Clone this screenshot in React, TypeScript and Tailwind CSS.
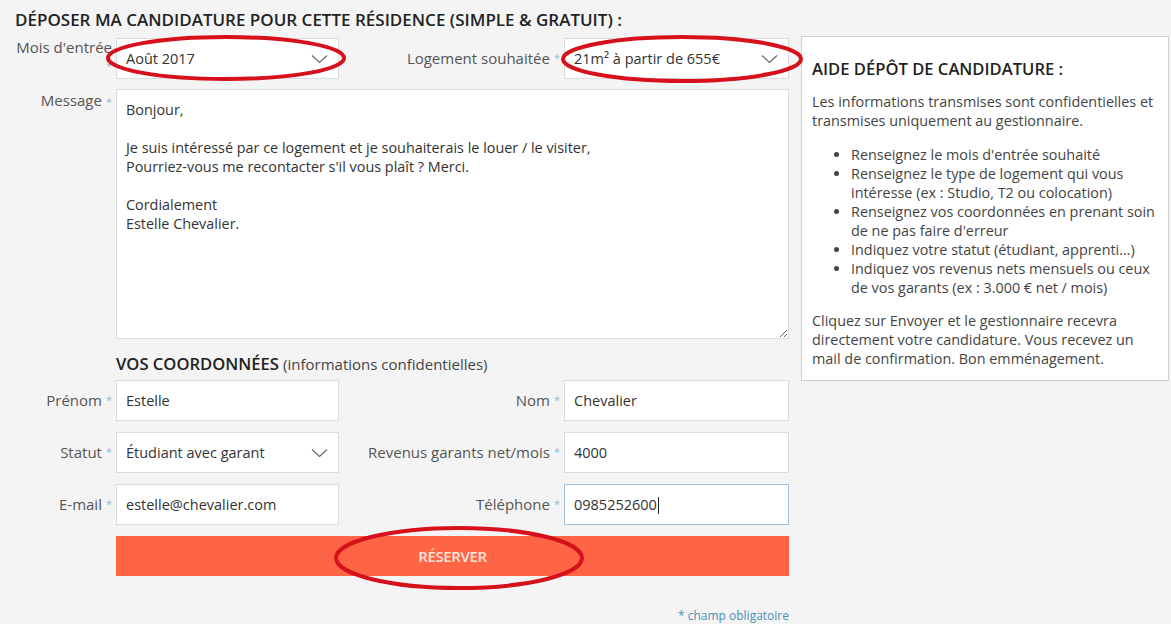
import React from 'react';

const Star = () => <span className="text-[#8dbdd8] text-[11px] ml-[4px]">*</span>;

function Chevron() {
    return (
        <svg width="17" height="10" viewBox="0 0 17 10" className="shrink-0">
            <path d="M1 1.5 L8.5 8.5 L16 1.5" fill="none" stroke="#666" strokeWidth="1.2" />
        </svg>
    );
}

function Field({ value, select, focus }: { value: string; select?: boolean; focus?: boolean }) {
    return (
        <div
            className={`flex items-center h-full bg-white border pl-[9px] pr-[10px] text-[14.5px] text-[#333] ${
                focus ? 'border-[#9fbfdc]' : 'border-[#dcdcdc]'
            }`}
        >
            <span className="flex-1 whitespace-nowrap">
                {value}
                {focus && <span className="inline-block w-px h-[17px] bg-[#222] align-middle ml-px" />}
            </span>
            {select && <Chevron />}
        </div>
    );
}

function Label({ children, className = '' }: { children: React.ReactNode; className?: string }) {
    return (
        <div className={`flex items-center justify-end pr-[4px] text-[15px] text-[#555] whitespace-nowrap ${className}`}>
            {children}
        </div>
    );
}

const message = `Bonjour,

Je suis intéressé par ce logement et je souhaiterais le louer / le visiter,
Pourriez-vous me recontacter s'il vous plaît ? Merci.

Cordialement
Estelle Chevalier.`;

export default function App() {
    return (
        <div className="relative w-[1171px] h-[624px] overflow-hidden bg-[#f4f4f4] font-['Open_Sans',sans-serif]">
            <h1 className="pl-[15px] pt-[10px] text-[17px] leading-5 font-semibold text-[#222] whitespace-nowrap">
                DÉPOSER MA CANDIDATURE POUR CETTE RÉSIDENCE (SIMPLE &amp; GRATUIT) :
            </h1>

            <div className="flex mt-[6px]">
                {/* form */}
                <div className="w-[789px] pt-[2px] flex flex-col">
                    <div className="flex h-[41px]">
                        <div className="w-[116px] pr-[4px] text-right text-[15px] text-[#555] leading-[20px] whitespace-nowrap">
                            <div className="-mt-[1px]">Mois d'entrée</div>
                            <div className="leading-[10px] mt-[2px]"><Star /></div>
                        </div>
                        <div className="w-[223px]"><Field value="Août 2017" select /></div>
                        <Label className="w-[225px]">Logement souhaitée<Star /></Label>
                        <div className="w-[225px]"><Field value="21m² à partir de 655€" select /></div>
                    </div>

                    <div className="flex mt-[10px]">
                        <div className="w-[116px] pr-[4px] text-right text-[15px] text-[#555] whitespace-nowrap">
                            Message<Star />
                        </div>
                        <textarea
                            readOnly
                            value={message}
                            className="w-[673px] h-[250px] bg-white border border-[#dcdcdc] pl-[9px] pt-[10px] text-[14.4px] leading-[19px] text-[#333] font-['Open_Sans',sans-serif] outline-none"
                        />
                    </div>

                    <div className="ml-[116px] mt-[15px] text-[#222] whitespace-nowrap leading-5">
                        <span className="text-[16.6px] font-semibold">VOS COORDONNÉES</span>{' '}
                        <span className="text-[15px] text-[#444]">(informations confidentielles)</span>
                    </div>

                    <div className="flex flex-col gap-[11px] mt-[6px]">
                        <div className="flex h-[41px]">
                            <Label className="w-[116px]">Prénom<Star /></Label>
                            <div className="w-[223px]"><Field value="Estelle" /></div>
                            <Label className="w-[225px]">Nom<Star /></Label>
                            <div className="w-[225px]"><Field value="Chevalier" /></div>
                        </div>
                        <div className="flex h-[41px]">
                            <Label className="w-[116px]">Statut<Star /></Label>
                            <div className="w-[223px]"><Field value="Étudiant avec garant" select /></div>
                            <Label className="w-[225px]">Revenus garants net/mois<Star /></Label>
                            <div className="w-[225px]"><Field value="4000" /></div>
                        </div>
                        <div className="flex h-[41px]">
                            <Label className="w-[116px]">E-mail<Star /></Label>
                            <div className="w-[223px]"><Field value="estelle@chevalier.com" /></div>
                            <Label className="w-[225px]">Téléphone<Star /></Label>
                            <div className="w-[225px]"><Field value="0985252600" focus /></div>
                        </div>
                        <div className="flex">
                            <div className="w-[116px]" />
                            <button className="w-[673px] h-[40px] bg-[#ff6545] text-[#fbe3dc] text-[15px] font-semibold tracking-tight">
                                RÉSERVER
                            </button>
                        </div>
                    </div>

                    <div className="mt-[31px] text-right text-[12px] text-[#4a8fb5]">* champ obligatoire</div>
                </div>

                {/* help panel */}
                <aside className="ml-[12px] w-[368px] self-start bg-white border border-[#cfcfcf] pl-[10px] pr-[6px] pt-[22px] pb-[12px] text-[14.4px] leading-[19px] text-[#444] whitespace-nowrap">
                    <h2 className="text-[16.6px] leading-5 font-semibold text-[#222]">AIDE DÉPÔT DE CANDIDATURE :</h2>
                    <p className="mt-[13px]">
                        Les informations transmises sont confidentielles et
                        <br />
                        transmises uniquement au gestionnaire.
                    </p>
                    <ul className="mt-[15px] pl-[39px] list-disc">
                        <li>Renseignez le mois d'entrée souhaité</li>
                        <li>
                            Renseignez le type de logement qui vous
                            <br />
                            intéresse (ex : Studio, T2 ou colocation)
                        </li>
                        <li>
                            Renseignez vos coordonnées en prenant soin
                            <br />
                            de ne pas faire d'erreur
                        </li>
                        <li>Indiquez votre statut (étudiant, apprenti…)</li>
                        <li>
                            Indiquez vos revenus nets mensuels ou ceux
                            <br />
                            de vos garants (ex : 3.000 € net / mois)
                        </li>
                    </ul>
                    <p className="mt-[14px]">
                        Cliquez sur Envoyer et le gestionnaire recevra
                        <br />
                        directement votre candidature. Vous recevez un
                        <br />
                        mail de confirmation. Bon emménagement.
                    </p>
                </aside>
            </div>

            {/* red annotation ellipses drawn over the screenshot */}
            <svg className="absolute inset-0 pointer-events-none" width="1171" height="624">
                <ellipse cx="226" cy="58" rx="118" ry="21" fill="none" stroke="#d6111c" strokeWidth="4" />
                <ellipse cx="682" cy="59" rx="119" ry="22" fill="none" stroke="#d6111c" strokeWidth="4" />
                <ellipse cx="459" cy="558" rx="123" ry="30" fill="none" stroke="#d6111c" strokeWidth="4" />
            </svg>
        </div>
    );
}
